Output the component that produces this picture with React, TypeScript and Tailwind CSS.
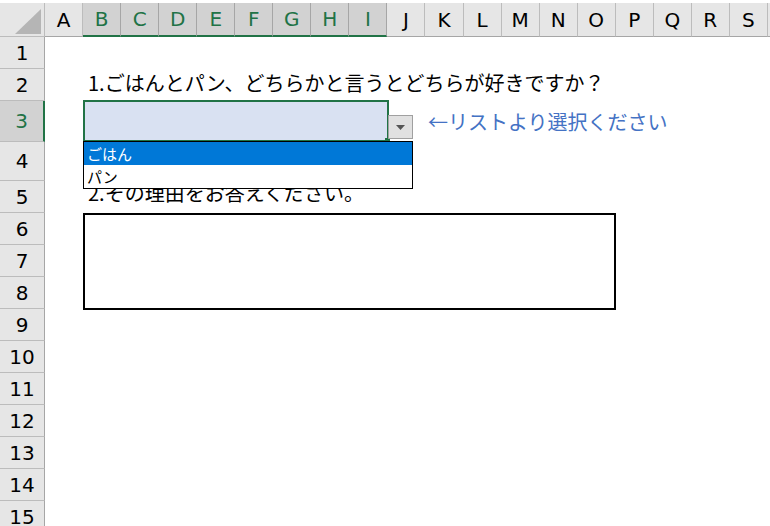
import React from 'react';

const COLS = ['A', 'B', 'C', 'D', 'E', 'F', 'G', 'H', 'I', 'J', 'K', 'L', 'M', 'N', 'O', 'P', 'Q', 'R', 'S', ''];
const SELECTED_COLS = ['B', 'C', 'D', 'E', 'F', 'G', 'H', 'I'];

const ROWS = [
  { n: 1, h: 'h-[32px]' },
  { n: 2, h: 'h-[32px]' },
  { n: 3, h: 'h-[41px]' },
  { n: 4, h: 'h-[39px]' },
  { n: 5, h: 'h-[32px]' },
  { n: 6, h: 'h-[32px]' },
  { n: 7, h: 'h-[32px]' },
  { n: 8, h: 'h-[32px]' },
  { n: 9, h: 'h-[32px]' },
  { n: 10, h: 'h-[32px]' },
  { n: 11, h: 'h-[32px]' },
  { n: 12, h: 'h-[32px]' },
  { n: 13, h: 'h-[32px]' },
  { n: 14, h: 'h-[32px]' },
  { n: 15, h: 'h-[32px]' },
];

const jp = "font-['Noto_Sans_CJK_JP','Noto_Sans',sans-serif]";

function RowContent({ n }: { n: number }) {
  if (n === 2) {
    return (
      <div className={`pl-[43px] pt-[4px] text-[20px] leading-[20px] text-black whitespace-nowrap ${jp}`}>
        1.ごはんとパン、どちらかと言うとどちらが好きですか？
      </div>
    );
  }
  if (n === 3) {
    return (
      <div className="flex items-center h-full">
        <div className="ml-[38px] w-[306px] h-[42px] -mt-[1px] border-2 border-[#217346] bg-[#d9e1f2] shrink-0" />
        <div className={`ml-[39px] text-[20px] leading-[20px] text-[#4472c4] whitespace-nowrap ${jp}`}>
          ←リストより選択ください
        </div>
      </div>
    );
  }
  if (n === 5) {
    return (
      <div className={`pl-[43px] pt-[2px] text-[20px] leading-[20px] text-black whitespace-nowrap ${jp}`}>
        2.その理由をお答えください。
      </div>
    );
  }
  return null;
}

export default function App() {
  return (
    <div className="relative w-[770px] h-[526px] overflow-hidden bg-white font-['DejaVu_Sans',sans-serif]">
      {/* column headers */}
      <div className="flex h-[37px] pt-[3px]">
        <div className="relative w-[45px] shrink-0 bg-[#e6e6e6] border-r border-b border-[#bcbcbc]">
          <svg className="absolute inset-0" width="45" height="34" viewBox="0 0 45 34">
            <polygon points="15,31 41,31 41,6" fill="#b5b5b5" />
          </svg>
        </div>
        {COLS.map((c, i) => {
          const sel = SELECTED_COLS.includes(c);
          return (
            <div
              key={i}
              className={
                sel
                  ? 'w-[38.05px] shrink-0 flex items-center justify-center bg-[#d2d2d2] text-[#217346] border-r border-r-[#a6a6a6] border-b-2 border-b-[#217346] text-[20px]'
                  : 'w-[38.05px] shrink-0 flex items-center justify-center bg-[#e6e6e6] text-black border-r border-r-[#bcbcbc] border-b border-b-[#a6a6a6] text-[20px]'
              }
            >
              {c}
            </div>
          );
        })}
      </div>

      {/* rows */}
      {ROWS.map((r) => {
        const sel = r.n === 3;
        return (
          <div key={r.n} className={`flex ${r.h}`}>
            <div
              className={
                sel
                  ? 'w-[45px] shrink-0 flex items-center justify-center bg-[#d2d2d2] text-[#217346] border-r-2 border-r-[#217346] border-b border-b-[#bcbcbc] text-[20px]'
                  : 'w-[45px] shrink-0 flex items-center justify-center bg-[#e6e6e6] text-black border-r border-r-[#a6a6a6] border-b border-b-[#bcbcbc] text-[20px]'
              }
            >
              {r.n}
            </div>
            <div className="flex-1 relative">
              <RowContent n={r.n} />
            </div>
          </div>
        );
      })}

      {/* fill handle of the selected cell */}
      <div className="absolute left-[385px] top-[138px] w-[5px] h-[5px] bg-[#217346]" />

      {/* dropdown arrow button */}
      <div className="absolute left-[388px] top-[115px] w-[25px] h-[24px] bg-[#e1e1e1] border border-[#a0a0a0] flex items-center justify-center">
        <svg width="9" height="5" viewBox="0 0 9 5">
          <polygon points="0,0 9,0 4.5,5" fill="#555555" />
        </svg>
      </div>

      {/* dropdown list */}
      <div className={`absolute left-[83px] top-[141px] w-[330px] h-[48px] bg-white border border-black flex flex-col text-[15px] leading-[23px] ${jp}`}>
        <div className="h-[23px] bg-[#0078d7] text-white pl-[3px]">ごはん</div>
        <div className="h-[23px] text-black pl-[3px]">パン</div>
      </div>

      {/* text box shape */}
      <div className="absolute left-[83px] top-[213px] w-[533px] h-[97px] bg-white border-2 border-black" />
    </div>
  );
}
